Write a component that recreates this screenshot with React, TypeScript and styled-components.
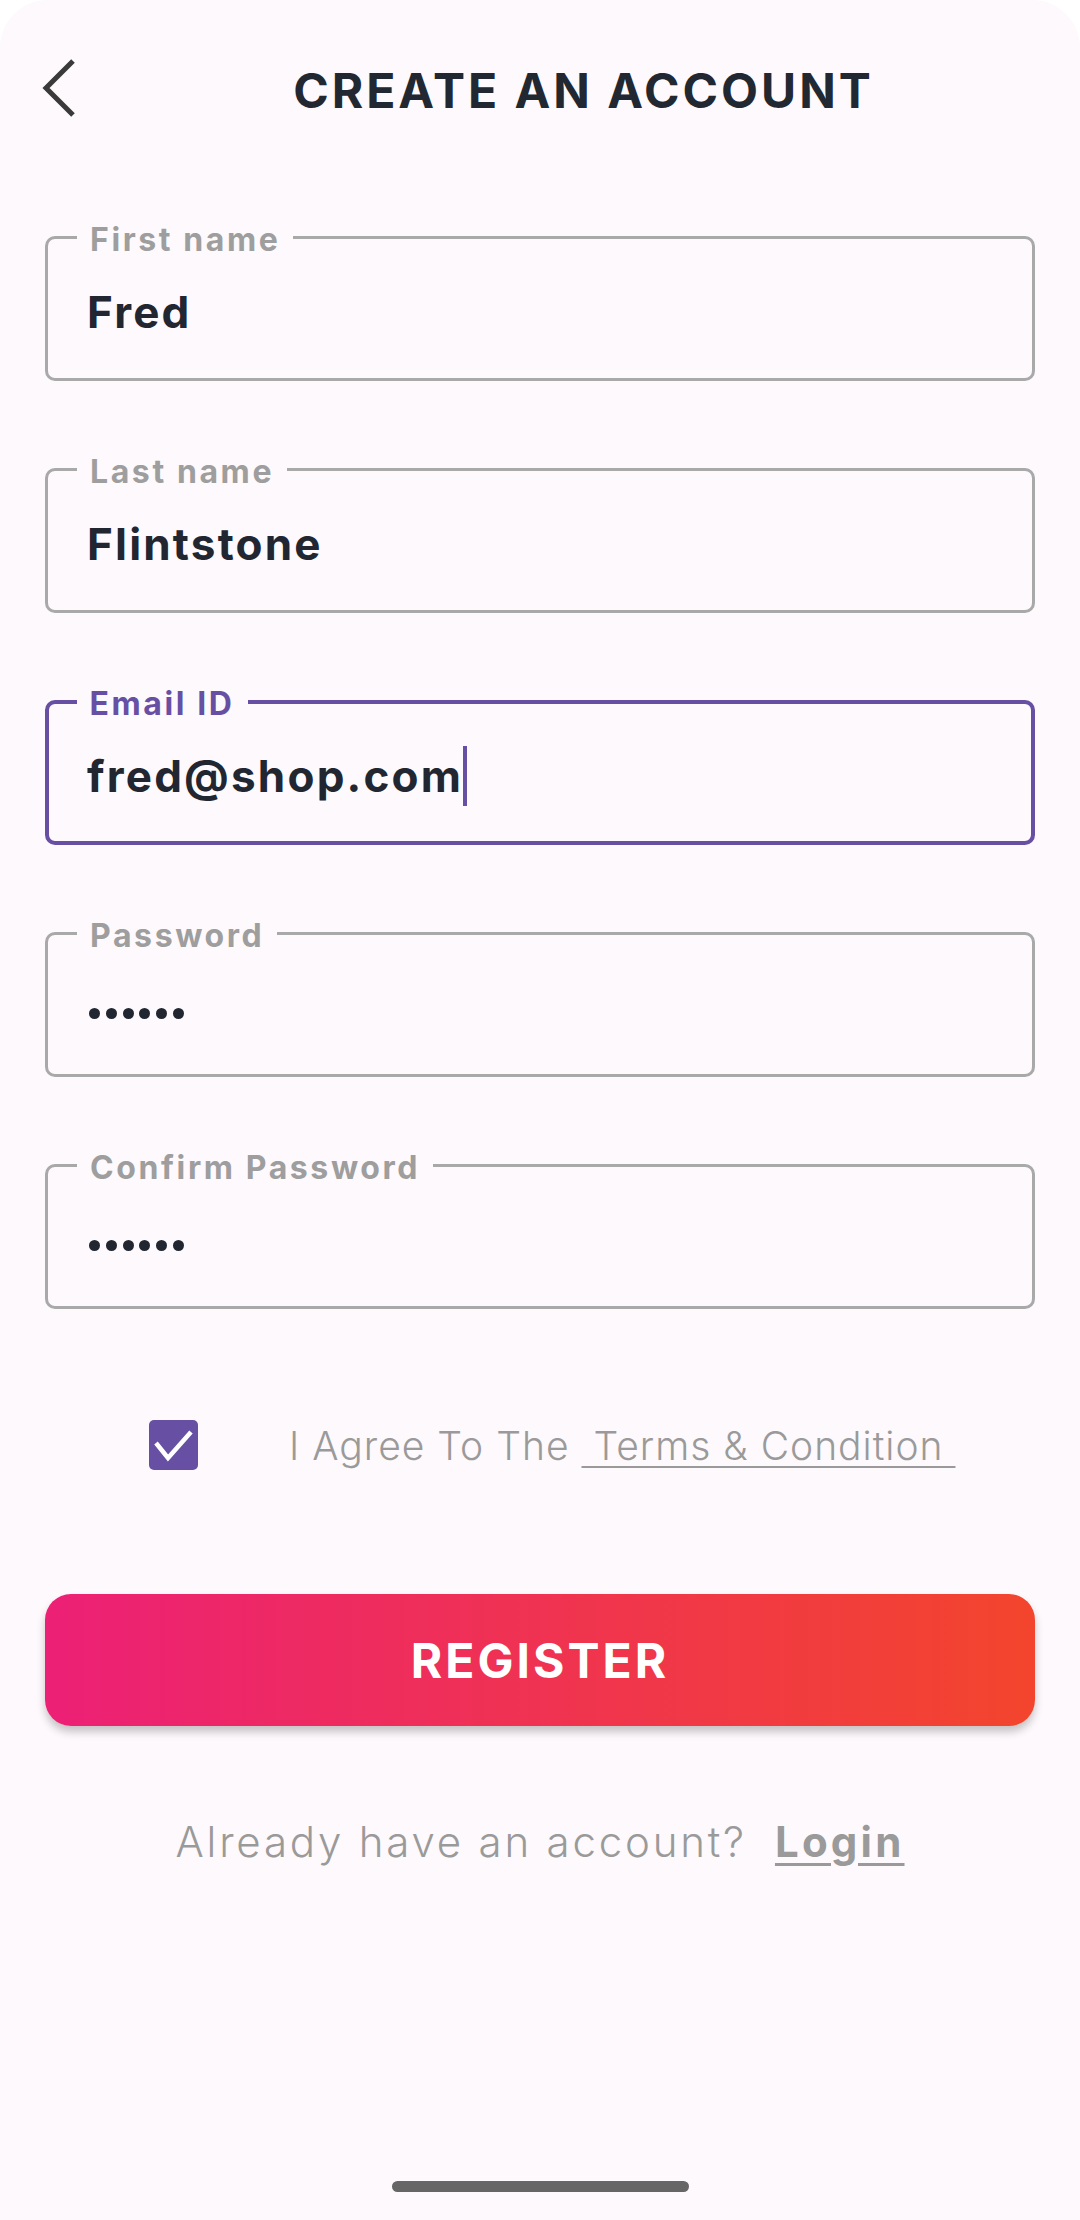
import React from 'react';
import styled, { createGlobalStyle } from 'styled-components';

const Global = createGlobalStyle`
  html, body { margin: 0; padding: 0; background: #ffffff; }
  body { font-family: Inter, "Noto Sans", sans-serif; -webkit-font-smoothing: antialiased; }
  #root { width: 1080px; }
`;

const Screen = styled.div`
  width: 1080px;
  min-height: 2220px;
  background: #fdf9fc;
  border-radius: 48px 48px 0 0;
  display: flex;
  flex-direction: column;
  box-sizing: border-box;
`;

const Header = styled.header`
  height: 180px;
  display: flex;
  align-items: center;
`;

const BackButton = styled.button`
  width: 87px;
  height: 100%;
  padding: 0 0 4px 40px;
  border: none;
  background: transparent;
  display: flex;
  align-items: center;
  cursor: pointer;
`;

const Title = styled.h1`
  flex: 1;
  margin: 0;
  text-align: center;
  font-size: 48px;
  font-weight: 700;
  color: #222831;
  letter-spacing: 3px;
`;

const Content = styled.main`
  display: flex;
  flex-direction: column;
  padding: 56px 45px 0;
`;

const Fields = styled.div`
  display: flex;
  flex-direction: column;
  gap: 87px;
`;

const Field = styled.div<{ $focused?: boolean }>`
  position: relative;
  height: 145px;
  box-sizing: border-box;
  border: ${(p) => (p.$focused ? '4.5px solid #6750a4' : '3px solid #a9a9a9')};
  border-radius: 10px;
  display: flex;
  align-items: center;
  padding: 6px 0 0 ${(p) => (p.$focused ? '38px' : '39px')};
`;

const Label = styled.span<{ $focused?: boolean }>`
  position: absolute;
  top: ${(p) => (p.$focused ? '-16.5px' : '-15px')};
  left: ${(p) => (p.$focused ? '27.5px' : '29px')};
  padding: 0 13px;
  background: #fdf9fc;
  font-size: 32px;
  line-height: 32px;
  font-weight: 700;
  letter-spacing: 2.6px;
  color: ${(p) => (p.$focused ? '#6750a4' : '#9e9e9e')};
`;

const Value = styled.span`
  font-size: 44px;
  font-weight: 700;
  color: #212631;
  display: flex;
  align-items: center;
  letter-spacing: 2.2px;
`;

const Caret = styled.span`
  display: inline-block;
  width: 4px;
  height: 60px;
  margin-left: 0;
  background: #6750a4;
`;

const Masked = styled.span`
  display: flex;
  gap: 5.8px;
  margin: 12px 0 0 2px;
`;

const Dot = styled.span`
  width: 11px;
  height: 11px;
  border-radius: 50%;
  background: #212631;
`;

const AgreeRow = styled.label`
  margin-top: 111px;
  padding-left: 104px;
  display: flex;
  align-items: center;
  gap: 91px;
  height: 50px;
`;

const CheckBox = styled.span`
  width: 49px;
  height: 50px;
  border-radius: 5px;
  background: #6750a4;
  display: flex;
  align-items: center;
  justify-content: center;
  flex-shrink: 0;
`;

const AgreeText = styled.span`
  font-size: 39px;
  font-weight: 300;
  color: #9a9a9a;
  white-space: pre;
  letter-spacing: 1px;
`;

const TermsLink = styled.a`
  color: #9a9a9a;
  text-decoration: underline;
  text-decoration-thickness: 2px;
  text-underline-offset: 6px;
`;

const RegisterButton = styled.button`
  margin-top: 124px;
  height: 132px;
  width: 100%;
  border: none;
  border-radius: 26px;
  background: linear-gradient(to right, #ec2076, #f3452d);
  box-shadow: 0 6px 8px rgba(0, 0, 0, 0.22);
  color: #ffffff;
  font-family: Inter, "Noto Sans", sans-serif;
  font-size: 48px;
  font-weight: 700;
  letter-spacing: 3px;
  cursor: pointer;
`;

const LoginRow = styled.p`
  margin: 85px 0 0;
  height: 60px;
  display: flex;
  align-items: center;
  justify-content: center;
  gap: 28px;
  font-size: 42px;
  font-weight: 300;
  color: #9a9a9a;
  letter-spacing: 2.8px;
`;

const LoginLink = styled.a`
  font-weight: 700;
  color: #9a9a9a;
  letter-spacing: 3.2px;
  text-decoration: underline;
  text-decoration-thickness: 3px;
  text-underline-offset: 6px;
`;

const HomeBar = styled.div`
  margin: auto auto 28px;
  width: 297px;
  height: 11px;
  border-radius: 6px;
  background: #666666;
`;

type FieldDef = { label: string; value: string; focused?: boolean; secret?: boolean };

const fields: FieldDef[] = [
  { label: 'First name', value: 'Fred' },
  { label: 'Last name', value: 'Flintstone' },
  { label: 'Email ID', value: 'fred@shop.com', focused: true },
  { label: 'Password', value: 'secret', secret: true },
  { label: 'Confirm Password', value: 'secret', secret: true },
];

export default function App() {
  return (
    <>
      <Global />
      <Screen>
        <Header>
          <BackButton aria-label="Back">
            <svg width="40" height="60" viewBox="0 0 40 60">
              <polyline points="33,3 6,30 33,57" fill="none" stroke="#3a3a3a" strokeWidth="5" strokeLinejoin="miter" />
            </svg>
          </BackButton>
          <Title>CREATE AN ACCOUNT</Title>
        </Header>
        <Content>
          <Fields>
            {fields.map((f) => (
              <Field key={f.label} $focused={f.focused}>
                <Label $focused={f.focused}>{f.label}</Label>
                {f.secret ? (
                  <Masked aria-label="••••••">
                    {Array.from({ length: f.value.length }).map((_, i) => (
                      <Dot key={i} />
                    ))}
                  </Masked>
                ) : (
                  <Value>
                    {f.value}
                    {f.focused && <Caret />}
                  </Value>
                )}
              </Field>
            ))}
          </Fields>
          <AgreeRow>
            <CheckBox>
              <svg width="49" height="50" viewBox="0 0 49 50">
                <polyline points="7,23 19,38 42,12" fill="none" stroke="#ffffff" strokeWidth="4.5" />
              </svg>
            </CheckBox>
            <AgreeText>
              I Agree To The <TermsLink> Terms &amp; Condition </TermsLink>
            </AgreeText>
          </AgreeRow>
          <RegisterButton>REGISTER</RegisterButton>
          <LoginRow>
            <span>Already have an account?</span>
            <LoginLink>Login</LoginLink>
          </LoginRow>
        </Content>
        <HomeBar />
      </Screen>
    </>
  );
}
